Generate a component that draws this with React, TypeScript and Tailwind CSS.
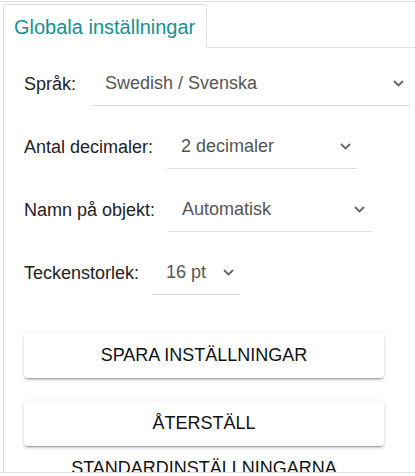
import React from "react";

function Chevron() {
  return (
    <svg width="11" height="7" viewBox="0 0 11 7" className="shrink-0">
      <path d="M1 1 L5.5 5.5 L10 1" fill="none" stroke="#666" strokeWidth="1.9" />
    </svg>
  );
}

function Row({
  label,
  value,
  selectClass,
}: {
  label: string;
  value: string;
  selectClass: string;
}) {
  return (
    <div className="flex items-center h-[44px]">
      <span className="text-[18px] text-[#222] whitespace-nowrap">{label}</span>
      <div
        className={
          "flex items-center justify-between h-[44px] border-b border-[#dcdcdc] pl-[14px] pr-[6px] " +
          selectClass
        }
      >
        <span className="text-[18px] text-[#555] whitespace-nowrap">{value}</span>
        <Chevron />
      </div>
    </div>
  );
}

export default function App() {
  return (
    <div className="w-[415px] h-[476px] overflow-hidden bg-white font-['Liberation_Sans',Arial,sans-serif]">
      <div className="mt-px h-[472px] border-t border-b border-[#e0e0e0] flex flex-col overflow-hidden pl-[3px] pt-[2px]">
        <div className="flex h-[44px] shrink-0">
          <div className="border-l border-t border-r border-[#e0e0e0] rounded-t-[4px] pl-[10px] pr-[11px] flex items-center">
            <span className="text-[20px] text-[#17908f] whitespace-nowrap">Globala inställningar</span>
          </div>
          <div className="flex-1 border-b border-[#e0e0e0]" />
        </div>
        <div className="flex-1 border-l border-[#e0e0e0] pl-[20px] pt-[14px] flex flex-col gap-[19px] overflow-hidden">
          <Row label="Språk:" value="Swedish / Svenska" selectClass="ml-[15px] flex-1 mr-[5px]" />
          <Row label="Antal decimaler:" value="2 decimaler" selectClass="ml-[14px] w-[190px]" />
          <Row label="Namn på objekt:" value="Automatisk" selectClass="ml-[13px] w-[203px]" />
          <Row label="Teckenstorlek:" value="16 pt" selectClass="ml-[13px] w-[88px]" />
          <div className="flex flex-col gap-[23px] mt-[19px]">
            <button className="w-[360px] h-[45px] leading-[45px] bg-white rounded-[4px] text-[18px] text-[#111] uppercase shadow-[0_3px_1px_-2px_rgba(0,0,0,0.2),0_2px_2px_0_rgba(0,0,0,0.14),0_1px_5px_0_rgba(0,0,0,0.12)] shrink-0">
              Spara inställningar
            </button>
            <button className="w-[360px] h-[45px] leading-[45px] bg-white rounded-[4px] text-[18px] text-[#111] uppercase shadow-[0_3px_1px_-2px_rgba(0,0,0,0.2),0_2px_2px_0_rgba(0,0,0,0.14),0_1px_5px_0_rgba(0,0,0,0.12)] shrink-0">
              Återställ standardinställningarna
            </button>
          </div>
        </div>
      </div>
    </div>
  );
}
